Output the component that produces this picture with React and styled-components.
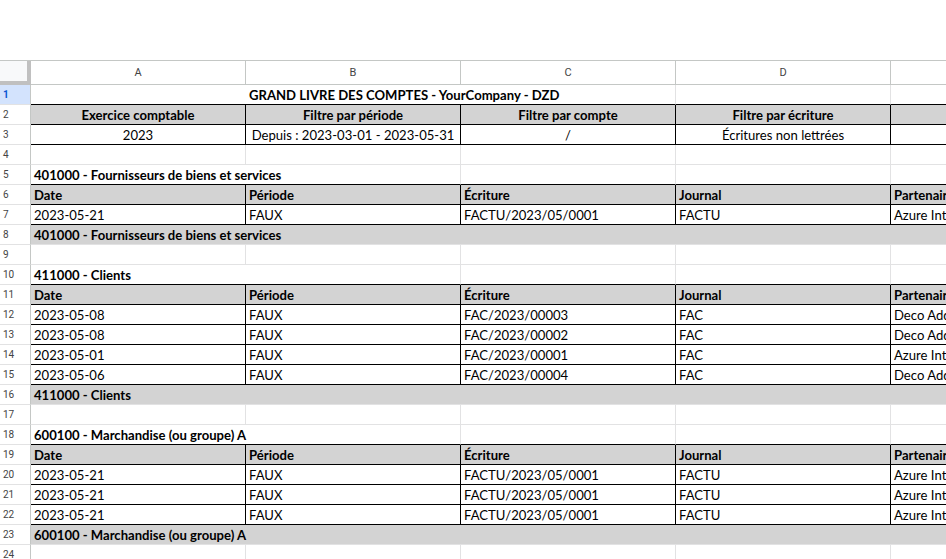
import React from 'react';
import styled, { createGlobalStyle } from 'styled-components';

// Couleurs de la grille façon tableur.
const GRID = '#e2e2e3';
const HEAD_LINE = '#c4c7c5';
const BLACK = '#000';
const FILL = '#d3d3d3';

const GlobalStyle = createGlobalStyle`
  html, body {
    margin: 0;
    padding: 0;
    background: #fff;
    overflow: hidden;
  }
`;

const Page = styled.div`
  width: 946px;
  height: 559px;
  overflow: hidden;
  padding-top: 60px;
  box-sizing: border-box;
  background: #fff;
`;

// Une ligne de la feuille : numéro + colonnes A à E.
const Row = styled.div`
  display: grid;
  grid-template-columns: 31px repeat(5, 215px);
  height: ${(p) => (p.$head ? '25px' : '20px')};
  border-top: ${(p) => (p.$head ? `1px solid ${HEAD_LINE}` : 'none')};
  box-sizing: border-box;
`;

const Corner = styled.div`
  background: #f8f9fa;
  border-right: 4px solid #c0c0c0;
  border-bottom: 4px solid #c0c0c0;
  box-sizing: border-box;
  height: 24px;
`;

const ColLetter = styled.div`
  display: flex;
  align-items: center;
  justify-content: center;
  border-right: 1px solid ${HEAD_LINE};
  border-bottom: 1px solid ${HEAD_LINE};
  box-sizing: border-box;
  font-family: Roboto, 'Liberation Sans', sans-serif;
  font-size: 11px;
  color: #444;
`;

const RowNum = styled.div`
  display: flex;
  align-items: center;
  padding-left: 3px;
  border-right: 1px solid ${HEAD_LINE};
  border-bottom: 1px solid ${GRID};
  box-sizing: border-box;
  font-family: Roboto, 'Liberation Sans', sans-serif;
  font-size: 10px;
  color: ${(p) => (p.$active ? '#0b57d0' : '#444')};
  font-weight: ${(p) => (p.$active ? 700 : 400)};
  background: ${(p) => (p.$active ? '#d3e3fd' : '#fff')};
`;

const Cell = styled.div`
  grid-column: span ${(p) => p.$span || 1};
  display: flex;
  align-items: center;
  justify-content: ${(p) => (p.$center ? 'center' : 'flex-start')};
  padding: 1px 3px 0 ${(p) => p.$indent || 3}px;
  box-sizing: border-box;
  border-right: 1px solid ${(p) => p.$right || GRID};
  border-bottom: 1px solid ${(p) => p.$bottom || GRID};
  background: ${(p) => (p.$fill ? FILL : '#fff')};
  font-family: Lato, 'Open Sans', sans-serif;
  font-size: 13.1px;
  font-weight: ${(p) => (p.$bold ? 700 : 400)};
  color: #000;
  white-space: nowrap;
  overflow: hidden;
`;

const header = ['Date', 'Période', 'Écriture', 'Journal', 'Partenaire'];

const rows = [
  { kind: 'title', text: 'GRAND LIVRE DES COMPTES - YourCompany - DZD' },
  { kind: 'filterHead', cells: ['Exercice comptable', 'Filtre par période', 'Filtre par compte', 'Filtre par écriture', ''] },
  { kind: 'filterVal', cells: ['2023', 'Depuis : 2023-03-01 - 2023-05-31', '/', 'Écritures non lettrées', ''] },
  { kind: 'blank' },
  { kind: 'account', text: '401000 - Fournisseurs de biens et services' },
  { kind: 'head', cells: header },
  { kind: 'line', cells: ['2023-05-21', 'FAUX', 'FACTU/2023/05/0001', 'FACTU', 'Azure Interior'] },
  { kind: 'total', text: '401000 - Fournisseurs de biens et services' },
  { kind: 'blank' },
  { kind: 'account', text: '411000 - Clients' },
  { kind: 'head', cells: header },
  { kind: 'line', cells: ['2023-05-08', 'FAUX', 'FAC/2023/00003', 'FAC', 'Deco Addict'] },
  { kind: 'line', cells: ['2023-05-08', 'FAUX', 'FAC/2023/00002', 'FAC', 'Deco Addict'] },
  { kind: 'line', cells: ['2023-05-01', 'FAUX', 'FAC/2023/00001', 'FAC', 'Azure Interior'] },
  { kind: 'line', cells: ['2023-05-06', 'FAUX', 'FAC/2023/00004', 'FAC', 'Deco Addict'] },
  { kind: 'total', text: '411000 - Clients' },
  { kind: 'blank' },
  { kind: 'account', text: '600100 - Marchandise (ou groupe) A' },
  { kind: 'head', cells: header },
  { kind: 'line', cells: ['2023-05-21', 'FAUX', 'FACTU/2023/05/0001', 'FACTU', 'Azure Interior'] },
  { kind: 'line', cells: ['2023-05-21', 'FAUX', 'FACTU/2023/05/0001', 'FACTU', 'Azure Interior'] },
  { kind: 'line', cells: ['2023-05-21', 'FAUX', 'FACTU/2023/05/0001', 'FACTU', 'Azure Interior'] },
  { kind: 'total', text: '600100 - Marchandise (ou groupe) A' },
  { kind: 'blank' },
];

const boxed = ['filterHead', 'filterVal', 'head', 'line'];

function SheetRow({ row, next, index }) {
  // Bordure noire en bas si la ligne est encadrée ou si la suivante est un en-tête.
  const bottom = boxed.includes(row.kind) || (next && ['filterHead', 'head'].includes(next.kind)) ? BLACK : GRID;
  let cells;

  if (row.kind === 'title') {
    cells = [
      <Cell key="t" $span={3} $bold $indent={218} $bottom={bottom}>{row.text}</Cell>,
      <Cell key="d" $bottom={bottom} />,
      <Cell key="e" $bottom={bottom} />,
    ];
  } else if (row.kind === 'account') {
    cells = [
      <Cell key="t" $span={2} $bold $bottom={bottom}>{row.text}</Cell>,
      <Cell key="c" $bottom={bottom} />,
      <Cell key="d" $bottom={bottom} />,
      <Cell key="e" $bottom={bottom} />,
    ];
  } else if (row.kind === 'total') {
    cells = [<Cell key="t" $span={5} $bold $fill $right={FILL}>{row.text}</Cell>];
  } else if (row.kind === 'blank') {
    cells = [0, 1, 2, 3, 4].map((i) => <Cell key={i} $bottom={bottom} />);
  } else {
    const isFilter = row.kind === 'filterHead' || row.kind === 'filterVal';
    const fill = row.kind === 'filterHead' || row.kind === 'head';
    cells = row.cells.map((text, i) => (
      <Cell
        key={i}
        $center={isFilter}
        $bold={fill}
        $fill={fill}
        $bottom={bottom}
        $right={isFilter && i === 4 ? (fill ? FILL : '#fff') : BLACK}
      >
        {text}
      </Cell>
    ));
  }

  return (
    <Row>
      <RowNum $active={index === 0}>{index + 1}</RowNum>
      {cells}
    </Row>
  );
}

export default function App() {
  return (
    <Page>
      <GlobalStyle />
      <Row $head>
        <Corner />
        {['A', 'B', 'C', 'D', 'E'].map((l) => (
          <ColLetter key={l}>{l}</ColLetter>
        ))}
      </Row>
      {rows.map((row, i) => (
        <SheetRow key={i} row={row} next={rows[i + 1]} index={i} />
      ))}
    </Page>
  );
}
